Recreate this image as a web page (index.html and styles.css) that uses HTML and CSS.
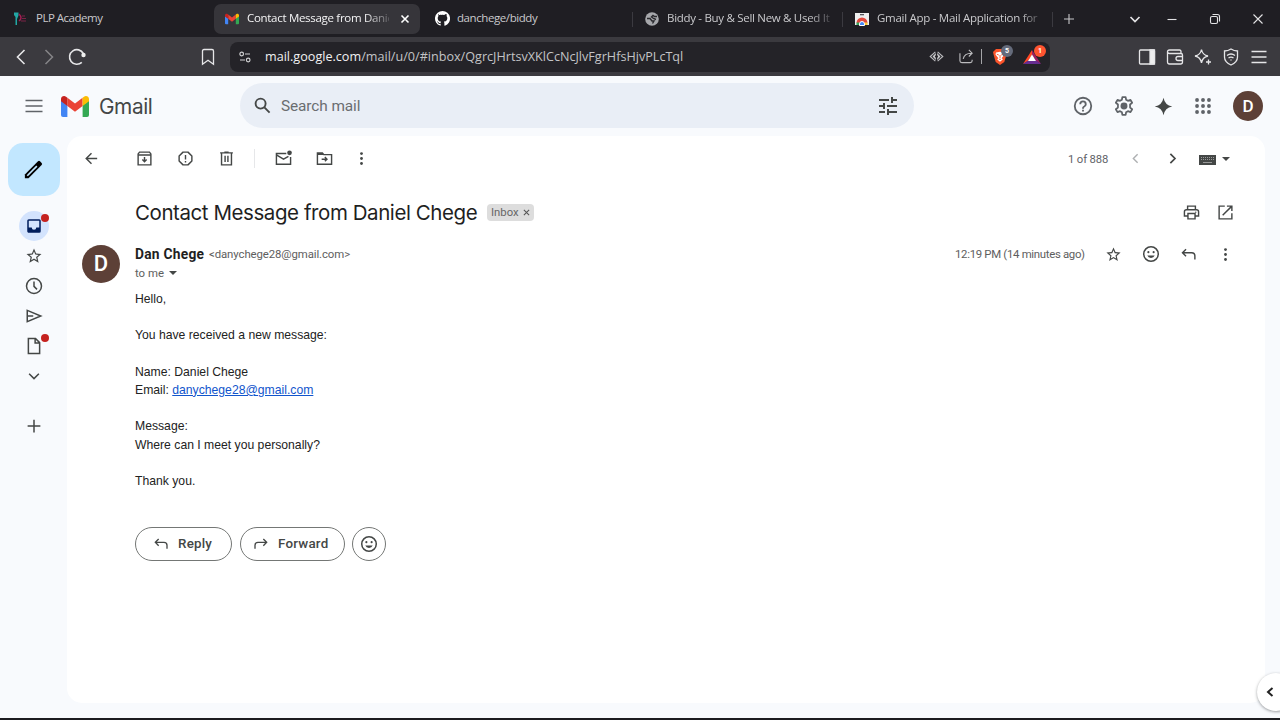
FILE: index.html
```html
<!DOCTYPE html>
<html lang="en">
<head>
<meta charset="utf-8">
<title>Contact Message from Daniel Chege</title>
<link rel="stylesheet" href="styles.css">
</head>
<body>
<svg class="sprite" width="0" height="0">
  <symbol id="gmail" viewBox="0 0 28 21">
    <path fill="#4285f4" d="M0 4.5 6.4 9.3V21H2a2 2 0 0 1-2-2z"/>
    <path fill="#34a853" d="M28 4.5 21.6 9.3V21H26a2 2 0 0 0 2-2z"/>
    <path fill="#ea4335" d="M6.4 1.7 14 7.4l7.6-5.7v8.4L14 15.8 6.4 10.1z"/>
    <path fill="#c5221f" d="M0 3.1C0 .5 3-.8 5 .7l1.4 1v8.4L0 5.3z"/>
    <path fill="#fbbc04" d="M28 3.1C28 .5 25-.8 23 .7l-1.4 1v8.4L28 5.3z"/>
  </symbol>
  <symbol id="star" viewBox="0 0 24 24"><path d="m22 9.24-7.19-.62L12 2 9.19 8.63 2 9.24l5.46 4.73L5.82 21 12 17.27 18.18 21l-1.63-7.03L22 9.24zM12 15.4l-3.76 2.27 1-4.28-3.32-2.88 4.38-.38L12 6.1l1.71 4.04 4.38.38-3.32 2.88 1 4.28L12 15.4z"/></symbol>
  <symbol id="smile" viewBox="0 0 24 24"><circle cx="12" cy="12" r="9.7" fill="none" stroke="currentColor" stroke-width="2"/><circle cx="8.5" cy="9.5" r="1.4"/><circle cx="15.5" cy="9.5" r="1.4"/><path d="M7 14h10a5.4 5.4 0 0 1-5 3.3A5.4 5.4 0 0 1 7 14z"/></symbol>
  <symbol id="reply" viewBox="0 0 24 24"><path fill="none" stroke="currentColor" stroke-width="2" d="M8.5 4.5l-5 5 5 5M3.500 9.500h13q4.500 0 4.500 4.500v5"/></symbol>
  <symbol id="more" viewBox="0 0 24 24"><circle cx="12" cy="5" r="2"/><circle cx="12" cy="12" r="2"/><circle cx="12" cy="19" r="2"/></symbol>
</svg>

<header class="tabs">
  <div class="tab">
    <svg class="fav plp" viewBox="0 0 14 14"><path fill="#23a7a5" d="M0 .5h4.500v3L3 7v6H1.500V5L0 3z"/><path fill="none" stroke="#a51d54" stroke-width="1.400" d="M5 2q4 4 0 7"/><path stroke="#7b2346" stroke-width="1" d="M8 4h3M8 6.500h4M7 9h5"/></svg>
    <span class="tab-text t1">PLP Academy</span>
  </div>
  <div class="tab active">
    <svg class="fav"><use href="#gmail"/></svg>
    <span class="tab-text t2">Contact Message from Danie</span>
    <svg class="close" viewBox="0 0 10 10"><path d="m1.500 1.500 7 7m0-7-7 7"/></svg>
  </div>
  <div class="tab divided">
    <svg class="fav gh" viewBox="0 0 16 16"><path fill="#fff" d="M8 0a8 8 0 0 0-2.530 15.590c.4.070.55-.17.55-.38v-1.490c-2.230.49-2.700-.94-2.700-.94-.36-.92-.89-1.170-.89-1.170-.72-.5.060-.49.060-.49.8.060 1.230.83 1.230.83.71 1.220 1.870.87 2.330.66.070-.52.28-.87.5-1.070-1.770-.2-3.640-.89-3.640-3.950 0-.87.31-1.590.82-2.150-.08-.2-.36-1.010.08-2.120 0 0 .67-.21 2.200.82a7.600 7.600 0 0 1 4 0c1.530-1.040 2.200-.82 2.200-.82.44 1.110.16 1.920.08 2.120.51.56.82 1.280.82 2.150 0 3.070-1.870 3.750-3.650 3.950.29.25.54.73.54 1.480v2.200c0 .21.15.46.55.38A8 8 0 0 0 8 0z"/></svg>
    <span class="tab-text t3">danchege/biddy</span>
  </div>
  <div class="tab divided">
    <svg class="fav" viewBox="0 0 14 14"><circle cx="7" cy="7" r="6.800" fill="#a6a7ab"/><path fill="none" stroke="#29292d" stroke-width="1.400" d="M12 4.500H9.500L8 3.500 6.500 5l2 1.500 2.500 1M2 6.500h3l2 2.500h2L7.500 11.500"/></svg>
    <span class="tab-text t4">Biddy - Buy &amp; Sell New &amp; Used It</span>
  </div>
  <div class="tab divided">
    <svg class="fav" viewBox="0 0 14 14"><path fill="#eee" d="M0 1h14v12H0z"/><path fill="#55565c" d="M5 2h4v1.300H5z"/><path fill="#e2483d" d="M1.500 11a5.500 5.500 0 0 1 11 0l-3 2h-5z"/><path fill="#ffca36" d="M9.500 10.500h3V13h-3z"/><path fill="#36a55a" d="M1.500 10.500h3V13h-3z"/><path fill="#4285f4" stroke="#fff" d="M4.500 13.500V12a2.500 2.500 0 0 1 5 0v1.500z"/></svg>
    <span class="tab-text t5">Gmail App - Mail Application for</span>
  </div>
  <svg class="win new" viewBox="0 0 12 12"><path d="M6 1v10M1 6h10"/></svg>
  <svg class="win down" viewBox="0 0 12 12"><path stroke-width="1.700" d="m1.500 4 4.500 4.500L10.500 4"/></svg>
  <svg class="win min" viewBox="0 0 12 12"><path d="M1.500 6.500h9"/></svg>
  <svg class="win max" viewBox="0 0 12 12"><rect x="1.500" y="3.500" width="7" height="7" rx="1.500"/><path d="M3.500 1.500h5q2 0 2 2v5"/></svg>
  <svg class="win x" viewBox="0 0 12 12"><path d="m1.500 1.500 9 9m0-9-9 9"/></svg>
</header>

<div class="nav">
  <svg class="n back" viewBox="0 0 18 18"><path d="M12.500 2 5.500 9l7 7"/></svg>
  <svg class="n fwd" viewBox="0 0 18 18"><path d="M5.500 2 12.500 9l-7 7"/></svg>
  <svg class="n reload" viewBox="0 0 18 18"><path d="M13.800 14.300A7.300 7.300 0 1 1 15.300 5.500"/><circle cx="15.500" cy="7" r="2.200" fill="#eee" stroke="none"/></svg>
  <svg class="n mark" viewBox="0 0 18 18"><path d="M3.500 3q0-1.500 1.500-1.500h8q1.500 0 1.500 1.500v13.300L9 12.200l-5.500 4.100z"/></svg>
  <div class="url">
    <svg class="site" viewBox="0 0 12 12"><g fill="none" stroke="#d0d0d2" stroke-width="1.200"><circle cx="2.700" cy="3" r="1.800"/><path d="M6 3h5M1 9h5"/><circle cx="9.200" cy="9" r="1.800"/></g></svg>
    <span class="address"><b>mail.google.com</b>/mail/u/0/#inbox/QgrcJHrtsvXKlCcNcJlvFgrHfsHjvPLcTql</span>
    <svg class="u eye" viewBox="0 0 16 16"><path d="M6.800 3 1.300 8l5.500 5M9.200 3l5.500 5-5.500 5"/><path stroke="none" fill="#c8c8ca" d="M7.300 4.200 3.800 8l3.500 3.800V9.500L6.200 8l1.100-1.500zM8.700 4.200 12.200 8l-3.500 3.800V9.500L9.800 8 8.700 6.500z"/></svg>
    <svg class="u share" viewBox="0 0 16 16"><path d="M1 4.500v8q0 2 2 2h9q2 0 2-2v-1M4.500 10.500q1-6 9-6M10.500 1l3.500 3.500L10.500 8"/></svg>
    <span class="bar"></span>
    <span class="ext"><svg viewBox="0 0 16 18"><path fill="#fb542b" d="M4 1h8l3 3-.7 3-2 7L8 17l-4.300-3-2-7L1 4z"/><path fill="#fff" d="m4 4.500 4-.8 4 .8.500 2-2.700 3.500 1 1.500L8 13.800l-2.800-2.300 1-1.500L3.500 6.500z"/><path fill="none" stroke="#fb542b" stroke-width=".9" d="m4.800 6.200 2 .8M11.200 6.200l-2 .8M8 7v3M6.800 10.800l1.200.8 1.200-.8"/></svg><i class="count gray">5</i></span>
    <span class="ext bat"><svg viewBox="0 0 18 16"><path fill="#ff4724" d="M9 1v5l-4 6-5 3z"/><path fill="#9e1f63" d="M9 1v5l4 6 5 3z"/><path fill="#662d91" d="M0 15h18l-5-3.500H5z"/><path fill="#fff" d="m9 5.500 4 6.500H5z"/></svg><i class="count red">1</i></span>
  </div>
  <svg class="n panel" viewBox="0 0 18 18"><rect x="1.500" y="2" width="15" height="14" rx="1"/><path fill="#eee" d="M12 2h4.500v14H12z"/></svg>
  <svg class="n wallet" viewBox="0 0 18 18"><path d="M15 5V3.500q0-1.500-1.500-1.500h-10Q1.500 2 1.500 3.700t2 1.800H15q1.500 0 1.500 1.500v7q0 2-2 2h-11q-2 0-2-2V3.500M16.500 8.500H12a2 2 0 0 0 0 4h4.500z"/></svg>
  <svg class="n leo" viewBox="0 0 18 18"><path d="M7.500 1.500q1 5.500 6.500 6.500-5.500 1-6.500 7-1-6-6.500-7 5.500-1 6.500-6.500zM14.500 11.500v5M12 14h5"/></svg>
  <svg class="n vpn" viewBox="0 0 18 18"><path d="M9 1q3 2 6.500 2v6q0 5-6.500 8-6.500-3-6.500-8V3Q6 3 9 1zM5 7.500q4-3 8 0M6.500 10q2.500-1.800 5 0"/><circle cx="9" cy="12" r=".7" fill="#ddd" stroke="none"/></svg>
  <svg class="n menu" viewBox="0 0 18 18"><path d="M1.500 3.500h15M1.500 9h15M1.500 14.500h15"/></svg>
</div>

<div class="app">
  <div class="top">
    <svg class="burger" viewBox="0 0 18 14"><path d="M.5 1.500h17M.5 7h17M.5 12.500h17"/></svg>
    <svg class="logo"><use href="#gmail"/></svg>
    <span class="brand">Gmail</span>
    <div class="search">
      <svg class="mag" viewBox="0 0 18 18"><circle cx="7" cy="7" r="5.300"/><path d="m11 11 5.500 5.500"/></svg>
      <span class="search-text">Search mail</span>
      <svg class="tune" viewBox="3 3 18 18"><path fill="#444746" d="M3 17v2h6v-2H3zM3 5v2h10V5H3zm10 16v-2h8v-2h-8v-2h-2v6h2zM7 9v2H3v2h4v2h2V9H7zm14 4v-2H11v2h10zm-6-4h2V7h4V5h-4V3h-2v6z"/></svg>
    </div>
    <svg class="g help" viewBox="0 0 24 24"><path d="M11 18h2v-2h-2v2zm1-16a10 10 0 1 0 0 20 10 10 0 0 0 0-20zm0 18a8 8 0 1 1 0-16 8 8 0 0 1 0 16zm0-14a4 4 0 0 0-4 4h2a2 2 0 1 1 4 0c0 2-3 1.750-3 5h2c0-2.250 3-2.500 3-5a4 4 0 0 0-4-4z"/></svg>
    <svg class="g gear" viewBox="0 0 24 24"><path fill="none" stroke="currentColor" stroke-width="1.900" stroke-linejoin="round" d="M10.200 2.300h3.600l.5 2.900 2 1.200 2.800-1.100 1.800 3.200-2.300 1.900v3.200l2.300 1.900-1.800 3.200-2.800-1.100-2 1.200-.5 2.900h-3.600l-.5-2.900-2-1.200-2.800 1.100-1.800-3.200 2.300-1.900v-3.200L3.100 8.500l1.800-3.200 2.800 1.100 2-1.200z"/><circle cx="12" cy="12" r="3.800"/></svg>
    <svg class="g spark" viewBox="0 0 24 24"><path d="M12 2q1.500 8.500 10 10-8.500 1.500-10 10-1.500-8.500-10-10 8.500-1.500 10-10z"/></svg>
    <svg class="g grid" viewBox="0 0 24 24"><circle cx="5.500" cy="5.500" r="2.100"/><circle cx="12" cy="5.500" r="2.100"/><circle cx="18.500" cy="5.500" r="2.100"/><circle cx="5.500" cy="12" r="2.100"/><circle cx="12" cy="12" r="2.100"/><circle cx="18.500" cy="12" r="2.100"/><circle cx="5.500" cy="18.500" r="2.100"/><circle cx="12" cy="18.500" r="2.100"/><circle cx="18.500" cy="18.500" r="2.100"/></svg>
    <span class="avatar small">D</span>
  </div>

  <div class="main">
    <nav class="side">
      <div class="compose"><svg viewBox="0 0 24 24"><path d="M3 17.200V21h3.800L20.500 7.300a1.500 1.500 0 0 0 0-2.100l-1.700-1.700a1.500 1.500 0 0 0-2.100 0z"/><path fill="none" stroke="#c2e7ff" stroke-width="1.700" d="M5.500 18.500 15.500 8.500"/></svg></div>
      <div class="s inbox"><svg viewBox="0 0 24 24"><path d="M19 3H5a2 2 0 0 0-2 2v14c0 1.100.9 2 2 2h14a2 2 0 0 0 2-2V5a2 2 0 0 0-2-2zm0 11h-4a3 3 0 0 1-6 0H5V5h14z"/></svg><i class="dot"></i></div>
      <div class="s starred"><svg><use href="#star"/></svg></div>
      <div class="s"><svg viewBox="0 0 24 24"><path fill="none" stroke="currentColor" stroke-width="2" d="M12 2a10 10 0 1 0 0 20 10 10 0 0 0 0-20zM12 6v6.500l4 4"/></svg></div>
      <div class="s"><svg viewBox="0 0 24 24"><path fill="none" stroke="currentColor" stroke-width="2" d="M3 4.500 21 12 3 19.500zM3 12h8"/></svg></div>
      <div class="s"><svg viewBox="0 0 24 24"><path fill="none" stroke="currentColor" stroke-width="2" d="M4.500 2h9.500l5.500 5.500V22h-15zM13.500 2v6h6"/></svg><i class="dot"></i></div>
      <div class="s"><svg viewBox="0 0 24 24"><path fill="none" stroke="currentColor" stroke-width="2" d="m5.500 9 6.500 6.500L18.500 9"/></svg></div>
      <div class="s plus"><svg viewBox="0 0 24 24"><path fill="none" stroke="currentColor" stroke-width="2" d="M12 3.500v17M3.500 12h17"/></svg></div>
    </nav>

    <main class="card">
      <div class="actions">
        <svg class="a back-i" viewBox="0 0 24 24"><path fill="none" stroke="currentColor" stroke-width="2" d="M20 12H5M12 4.500 4.500 12l7.500 7.500"/></svg>
        <svg class="a archive" viewBox="0 0 24 24"><path fill="none" stroke="currentColor" stroke-width="2" d="M5 3h14l2 2.500V21H3V5.500zM3 7h18M12 10v6M9 13.500l3 3 3-3"/></svg>
        <svg class="a spam" viewBox="0 0 24 24"><path fill="none" stroke="currentColor" stroke-width="2" stroke-linejoin="round" d="M8.500 3h7L21 8.500v7L15.500 21h-7L3 15.500v-7zM12 7v6.500M12 15.500v2"/></svg>
        <svg class="a trash" viewBox="0 0 24 24"><path fill="none" stroke="currentColor" stroke-width="2" d="M3 4h18M9 3h6M5 4v17h14V4M10 8v9M14 8v9"/></svg>
        <span class="line"></span>
        <svg class="a unread" viewBox="0 0 24 24"><path fill="none" stroke="currentColor" stroke-width="2" d="M16 5H2v15h20V10M2 7l10 6 7-4"/><circle cx="20.500" cy="4" r="3.300"/></svg>
        <svg class="a folder" viewBox="0 0 24 24"><path fill="none" stroke="currentColor" stroke-width="2" d="M2 4h7l2 2.500h11V20H2zM2 6h8M8 13h7M12.500 10l3 3-3 3"/></svg>
        <svg class="a more-i"><use href="#more"/></svg>
        <span class="pages">1 of 888</span>
        <svg class="a prev" viewBox="0 0 24 24"><path fill="none" stroke="currentColor" stroke-width="2" d="m15 6-6 6 6 6"/></svg>
        <svg class="a next" viewBox="0 0 24 24"><path fill="none" stroke="currentColor" stroke-width="2.400" d="m9 5.500 6.500 6.500L9 18.500"/></svg>
        <svg class="keys" viewBox="0 0 17 10"><path fill="#444746" d="M0 0h17v10H0z"/><path stroke="#999" stroke-dasharray="1 1" d="M2 2.500h13M2 4.500h13"/><path stroke="#999" d="M4 7.500h9"/></svg>
        <i class="caret"></i>
      </div>

      <div class="subject-row">
        <h1>Contact Message from Daniel Chege</h1>
        <span class="tag"><span>Inbox</span><svg viewBox="0 0 8 8"><path d="m1 1 6 6m0-6L1 7"/></svg></span>
        <svg class="a print" viewBox="0 0 24 24"><path fill="none" stroke="currentColor" stroke-width="2" d="M6.500 8V3h11v5M7 17H2V11q0-3 3-3h14q3 0 3 3v6h-5M7 13.500h10V21H7z"/><circle cx="18" cy="11.500" r="1"/></svg>
        <svg class="a open" viewBox="0 0 24 24"><path fill="none" stroke="currentColor" stroke-width="2" d="M11 3H3v18h18v-8M14 3h7v7M21 3 8 16"/></svg>
      </div>

      <div class="message">
        <span class="avatar big">D</span>
        <div class="content">
          <div class="from">
            <span class="name">Dan Chege</span>
            <span class="mail">&lt;danychege28@gmail.com&gt;</span>
            <span class="time">12:19 PM (14 minutes ago)</span>
            <svg class="a star-i"><use href="#star"/></svg>
            <svg class="a smile-i"><use href="#smile"/></svg>
            <svg class="a reply-i"><use href="#reply"/></svg>
            <svg class="a dots-i"><use href="#more"/></svg>
          </div>
          <div class="to"><span>to me</span><i class="caret"></i></div>
          <div class="body">
            <p>Hello,</p>
            <p>You have received a new message:</p>
            <p>Name: Daniel Chege<br>Email: <a>danychege28@gmail.com</a></p>
            <p>Message:<br>Where can I meet you personally?</p>
            <p>Thank you.</p>
          </div>
          <div class="buttons">
            <div class="btn reply-b"><svg><use href="#reply"/></svg><span>Reply</span></div>
            <div class="btn forward-b"><svg class="flip"><use href="#reply"/></svg><span>Forward</span></div>
            <div class="btn round"><svg><use href="#smile"/></svg></div>
          </div>
        </div>
      </div>
    </main>
  </div>
  <div class="drawer"><svg viewBox="0 0 8 10"><path d="M6.500 1 2 5l4.500 4"/></svg></div>
</div>
<div class="taskbar"></div>
</body>
</html>
```
FILE: styles.css
```css
* { box-sizing: border-box; }
body { margin: 0; width: 1280px; height: 720px; overflow: hidden; display: flex; flex-direction: column; background: #f8fafd; color: #202124; font-family: Roboto, sans-serif; white-space: nowrap; }
svg { display: block; flex: none; }
.sprite { position: absolute; }
i { font-style: normal; }

.tabs { height: 37px; flex: none; display: flex; align-items: center; padding-left: 4px; background: #1f1e23; }
.tab { position: relative; width: 210px; height: 30px; flex: none; display: flex; align-items: center; padding-left: 11px; color: #c9c9cc; font: 11.5px "Open Sans", sans-serif; letter-spacing: -.42px; }
.tab.active { width: 206px; margin-right: 4px; background: #36353a; border-radius: 7px; color: #f4f4f5; }
.tab.divided::after { content: ""; position: absolute; right: 1px; top: 8px; width: 1px; height: 15px; background: #3b3a40; }
.fav { width: 14px; height: 14px; margin-right: 8px; }
.fav.plp { margin-left: -1px; margin-right: 9px; }
.fav.gh { width: 15px; height: 15px; margin-right: 7px; }
.tab-text { line-height: 18px; margin-top: -1px; }
.t1 { margin-left: -1px; letter-spacing: -.5px; }
.t2 { width: 142px; letter-spacing: -.3px; -webkit-mask-image: linear-gradient(90deg, #000 118px, rgba(0, 0, 0, .2) 142px); mask-image: linear-gradient(90deg, #000 118px, rgba(0, 0, 0, .2) 142px); }
.t4, .t5 { width: 164px; -webkit-mask-image: linear-gradient(90deg, #000 142px, rgba(0, 0, 0, .2) 164px); mask-image: linear-gradient(90deg, #000 142px, rgba(0, 0, 0, .2) 164px); }
.t4 { letter-spacing: -.3px; }
.t5 { letter-spacing: -.28px; }
.close { width: 10px; height: 10px; margin-left: 11px; stroke: #fff; stroke-width: 1.6; }
.win { width: 12px; height: 12px; fill: none; stroke: #e3e3e5; stroke-width: 1.1; }
.new { margin-left: 9px; stroke: #c8c8cb; }
.down { margin-left: 54px; }
.min { margin-left: 25px; }
.max { margin-left: 31px; }
.x { margin-left: 31px; }

.nav { height: 39px; flex: none; display: flex; align-items: center; background: #3b3a3f; }
.n { width: 18px; height: 18px; fill: none; stroke: #e6e6e8; stroke-width: 1.3; }
.back { margin-left: 12px; stroke-width: 1.6; }
.fwd { margin-left: 10px; stroke: #858488; stroke-width: 1.5; }
.reload { margin-left: 10px; stroke-width: 1.6; }
.mark { margin-left: 113px; }
.url { width: 820px; height: 30px; margin-left: 13px; display: flex; align-items: center; border-radius: 8px; background: #242328; }
.site { width: 12px; height: 12px; margin-left: 9px; }
.address { width: 664px; margin-left: 14px; color: #c3c3c6; font: 12.6px/20px "Open Sans", sans-serif; letter-spacing: .01px; }
.address b { font-weight: 400; color: #f1f1f2; }
.u { width: 15px; height: 15px; fill: none; stroke: #bcbcbf; stroke-width: 1.2; }
.share { margin-left: 15px; }
.bar { width: 1px; height: 15px; margin-left: 7px; background: #a5a5a8; }
.ext { position: relative; margin-left: 10px; }
.ext svg { width: 16px; height: 18px; }
.ext.bat { margin-left: 15px; }
.ext.bat svg { width: 18px; height: 16px; }
.count { position: absolute; left: 9px; top: -3px; width: 12px; height: 12px; border-radius: 6px; background: #656b7b; color: #fff; font: 700 7px/12px Roboto, sans-serif; text-align: center; }
.count.red { left: 11px; top: -4px; background: #ff5430; }
.panel { margin-left: 88px; }
.wallet, .leo, .vpn, .menu { margin-left: 10px; }

.app { position: relative; height: 642px; flex: none; background: #f8fafd; overflow: hidden; color: #444746; }
.top { height: 60px; display: flex; align-items: center; }
.burger { width: 18px; height: 14px; margin-left: 25px; stroke: #5f6368; stroke-width: 1.7; }
.logo { width: 28px; height: 21px; margin-left: 18px; }
.brand { width: 88px; margin-left: 10px; padding-top: 1px; color: #444746; font: 20.8px/28px Inter, sans-serif; letter-spacing: -.4px; }
.search { width: 674px; height: 45px; margin-left: 53px; margin-top: -1px; display: flex; align-items: center; border-radius: 23px; background: #e9eef6; }
.mag { width: 17px; height: 17px; margin-left: 14px; fill: none; stroke: #444746; stroke-width: 2; }
.search-text { width: 598px; margin-left: 10px; color: #6a6d70; font: 15.4px/20px Roboto, sans-serif; letter-spacing: -.1px; }
.tune { width: 18px; height: 18px; }
.g { width: 22px; height: 22px; fill: currentColor; color: #5f6368; }
.help { margin-left: 158px; }
.gear { margin-left: 19px; }
.spark { margin-left: 18px; width: 21px; height: 21px; color: #444746; }
.grid { margin-left: 18px; }
.avatar { display: block; flex: none; border-radius: 50%; background: #5d4037; color: #fff; text-align: center; font-family: Roboto, sans-serif; }
.small { width: 30px; height: 30px; margin-left: 19px; font-size: 17px; line-height: 31px; font-weight: 500; }

.main { display: flex; }
.side { width: 67px; flex: none; display: flex; flex-direction: column; align-items: center; padding-top: 7px; color: #444746; }
.compose { width: 52px; height: 53px; display: flex; align-items: center; justify-content: center; margin-bottom: 15px; border-radius: 15px; background: #c2e7ff; }
.compose svg { width: 23px; height: 23px; fill: #000; }
.s { position: relative; width: 30px; height: 30px; display: flex; align-items: center; justify-content: center; margin-bottom: -.1px; }
.s svg { width: 18px; height: 18px; fill: currentColor; }
.starred { padding-top: 1px; }
.inbox { border-radius: 50%; background: #d3e3fd; color: #001d5c; }
.dot { position: absolute; left: 22px; top: 3px; width: 8px; height: 8px; border-radius: 50%; background: #c5221f; }
.plus { margin-top: 21px; }

.card { width: 1198px; height: 567px; flex: none; border-radius: 15px; background: #fff; }
.a { width: 17px; height: 17px; fill: currentColor; }
.actions { height: 45px; display: flex; align-items: center; padding-left: 16px; }
.archive { margin-left: 36px; }
.spam { margin-left: 24px; }
.trash { margin-left: 24px; }
.line { width: 1px; height: 19px; margin-left: 19px; background: #e6e7e9; }
.unread { margin-left: 20px; }
.folder { margin-left: 24px; }
.more-i { margin-left: 20px; }
.pages { width: 42px; margin-left: 698px; color: #5f6368; font-size: 11.3px; letter-spacing: -.15px; padding-top: 1px; }
.prev { margin-left: 17px; color: #aeb0b2; }
.next { margin-left: 20px; }
.keys { width: 17px; height: 10px; margin: 3px 6px 0 18px; }
.caret { width: 0; height: 0; border: 4px solid transparent; border-top-color: #444746; border-bottom: 0; }

.subject-row { height: 63px; display: flex; align-items: center; padding-left: 68px; }
h1 { width: 352px; margin: 0; font: 20.5px/28px Inter, sans-serif; letter-spacing: -.43px; color: #1f1f1f; }
.tag { width: 47px; height: 17px; flex: none; display: flex; align-items: center; padding-left: 4px; border-radius: 4px; background: #ddd; color: #666; font: 11.3px/16px Roboto, sans-serif; }
.tag span { width: 31px; }
.tag svg { width: 7px; height: 7px; stroke: #555; stroke-width: 1.2; margin-left: 1px; }
.print { margin-left: 649px; }
.open { margin-left: 17px; }

.message { display: flex; padding-left: 15px; }
.big { width: 38px; height: 38px; margin-top: 1px; font-size: 22px; line-height: 38px; font-weight: 500; }
.content { width: 1130px; margin-left: 15px; }
.from { height: 20px; display: flex; align-items: center; }
.name { width: 74px; color: #1f1f1f; font: 700 13.8px/20px Roboto, sans-serif; letter-spacing: .25px; }
.mail { width: 746px; color: #5e5e5e; font: 11.4px/20px Roboto, sans-serif; letter-spacing: -.1px; }
.time { width: 130px; color: #5e5e5e; font: 11.4px/20px Roboto, sans-serif; letter-spacing: -.31px; }
.star-i { margin-left: 20px; }
.smile-i { margin-left: 20px; width: 18px; height: 18px; }
.reply-i { margin-left: 20px; }
.dots-i { margin-left: 20px; }
.to { height: 17px; display: flex; align-items: center; gap: 5px; color: #5e5e5e; font-size: 11.4px; }
.body { padding-top: 8.6px; color: #222; font: 12.2px/18.27px "Liberation Sans", sans-serif; }
.body p { margin: 0 0 18.27px; }
.body a { color: #1155cc; text-decoration: underline; }
.buttons { display: flex; gap: 8px; padding-top: 18.4px; }
.btn { height: 34px; display: flex; align-items: center; border: 1px solid #747775; border-radius: 17px; color: #444746; font: 500 13.4px/20px Roboto, sans-serif; }
.btn svg { width: 16px; height: 16px; fill: currentColor; }
.btn span { margin-left: 9px; letter-spacing: .2px; }
.reply-b { width: 97px; padding-left: 17px; }
.forward-b { width: 105px; padding-left: 12px; }
.flip { transform: scaleX(-1); }
.round { width: 34px; margin-left: -1px; justify-content: center; }
.btn.round svg { width: 18px; height: 18px; }

.drawer { position: absolute; left: 1257px; top: 597px; width: 38px; height: 38px; display: flex; align-items: center; padding-left: 9px; border-radius: 50%; background: #fff; box-shadow: 0 1px 3px rgba(60, 64, 67, .5); }
.drawer svg { width: 8px; height: 10px; fill: none; stroke: #222; stroke-width: 2; }
.taskbar { flex: 1; background: #1c1c20; }
```
